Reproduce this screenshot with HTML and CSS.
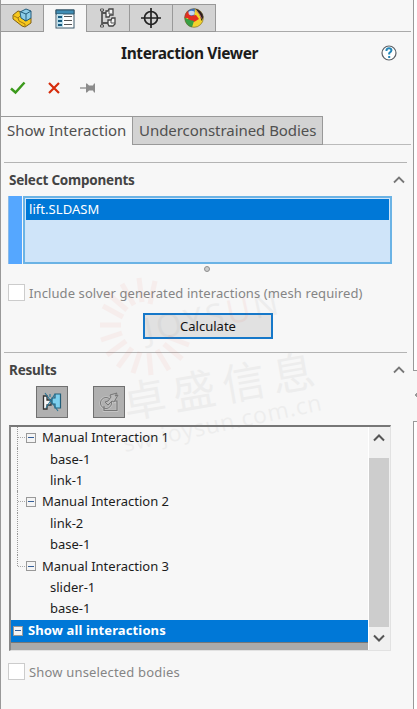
FILE: index.html
```html
<!DOCTYPE html>
<html lang="en">
<head>
    <meta charset="utf-8">
    <title>Interaction Viewer</title>
    <link rel="stylesheet" href="styles.css">
</head>
<body>
    <div id="page">
        <div id="panel">
            <!-- Manager tabs -->
            <div class="manager-tabs">
                <div class="manager-tab">
                    <svg width="20" height="20" viewBox="0 0 20 20">
                        <path d="M1 7l5-4 4 1v6l3 3 6-3v5l-6 4-3-1-9-7z" fill="#f7c81e" stroke="#806018"/>
                        <path d="M2 8l4 2 1 3 6 3v2M6 10l2-2" fill="none" stroke="#a77a10"/>
                        <path d="M8 4l6-3 5 2v7l-5 3-5-3z" fill="#8ccce8" stroke="#245d7c"/>
                        <path d="M9 4l5 2 5-3M14 6v7" fill="none" stroke="#245d7c"/>
                    </svg>
                </div>
                <div class="manager-tab active">
                    <svg width="20" height="20" viewBox="0 0 20 20">
                        <rect x="1" y="1" width="18" height="18" fill="#fff" stroke="#3b596b"/>
                        <path d="M1 1h18v4H1z" fill="#3f8db5" stroke="#2f5267"/>
                        <path d="M2 5h6v13H2z" fill="#b9ddeb"/>
                        <path d="M3 8h4M3 12h4M3 16h4" stroke="#185b80" stroke-width="2"/>
                        <path d="M9 7.500h8M9 11.500h8M9 15.500h8" stroke="#555"/>
                    </svg>
                </div>
                <div class="manager-tab">
                    <svg width="18" height="20" viewBox="0 0 18 20">
                        <path d="M3 1v18M3 5h5M3 15h6" fill="none" stroke="#555" stroke-width="1.800"/>
                        <path d="M1.500 1h3v2h-3zM1.500 17h3v2h-3z" fill="#eee" stroke="#555"/>
                        <path d="M7 3h2l1-2h4v6h-3l-1 2H7zM9 12h3l1-2h3v6l-2 2h-4l-1-2z" fill="#f4f4f4" stroke="#444" stroke-width="1.300"/>
                        <path d="M10 2v4h3M12 12v3h4" fill="none" stroke="#555"/>
                    </svg>
                </div>
                <div class="manager-tab">
                    <svg width="20" height="20" viewBox="0 0 20 20">
                        <circle cx="10" cy="10" r="6.500" fill="none" stroke="#222" stroke-width="1.700"/>
                        <path d="M10 0v20M0 10h20" stroke="#222" stroke-width="1.700"/>
                    </svg>
                </div>
                <div class="manager-tab">
                    <svg width="20" height="20" viewBox="0 0 20 20">
                        <circle cx="10" cy="10" r="9.500" fill="#f2d32c"/>
                        <path d="M.5 10A9.500 9.500 0 0 1 4 2.500L10 10z" fill="#e32d20"/>
                        <path d="M4 2.500Q7 0 11 .5L10 10Q5 8 4 2.500z" fill="#3974cb"/>
                        <path d="M6 8l6-1 3 4-5 3-7-2z" fill="#e32d20"/>
                        <path d="M.5 9.500Q5 12 10 13L8 19.300Q1 18 .5 9.500z" fill="#37a043"/>
                        <path d="M11 .5Q18 1.500 19.500 9l-2 4Q16 5 11 .5z" fill="#291b1b"/>
                        <path d="M12 2.500q4 3 5.500 8" fill="none" stroke="#c87570"/>
                        <ellipse cx="7.500" cy="5" rx="3" ry="2.200" fill="#fff" opacity=".7"/>
                        <circle cx="10" cy="10" r="9.300" fill="none" stroke="#665d48" stroke-width=".6"/>
                    </svg>
                </div>
            </div>

            <div class="title-row">
                <h1>Interaction Viewer</h1>
                <svg class="help" width="16" height="16" viewBox="0 0 16 16">
                    <circle cx="8" cy="8" r="7" fill="#fff" stroke="#5b6066" stroke-width="1.200"/>
                    <path d="M5.500 6V5q.3-1.700 2.500-1.700T10.500 5.300Q10.500 6.500 8.200 8.200V9.500M8.200 11v2" fill="none" stroke="#2587b8" stroke-width="2"/>
                </svg>
            </div>

            <div class="actions">
                <svg width="16" height="14" viewBox="0 0 16 14"><path d="M1 7.500l4.500 4L14.500 1.500" fill="none" stroke="#3c9a1c" stroke-width="2.500"/></svg>
                <svg width="12" height="12" viewBox="0 0 12 12"><path d="M1 1l10 10M11 1L1 11" stroke="#d62c0c" stroke-width="2.200"/></svg>
                <svg width="16" height="12" viewBox="0 0 16 12"><path d="M0 6h7" stroke="#8c8c8c" stroke-width="1.300"/><path d="M6 1.500h1l2 2h4l1-2h1v9h-1l-1-2H9l-2 2H6z" fill="#8c8c8c"/></svg>
            </div>

            <!-- Page tabs -->
            <div class="page-tabs">
                <div class="page-tab current"><span>Show Interaction</span></div>
                <div class="page-tab"><span>Underconstrained Bodies</span></div>
                <div class="tab-line"></div>
            </div>

            <div class="group components">
                <div class="group-head">
                    <h2>Select Components</h2>
                    <svg width="12" height="8" viewBox="0 0 12 8"><path d="M1 6.500l5-5 5 5" fill="none" stroke="#777" stroke-width="1.800"/></svg>
                </div>
                <div class="selection">
                    <div class="selection-color"></div>
                    <div class="selection-list"><div class="selected"><span>lift.SLDASM</span></div></div>
                </div>
                <div class="grip"></div>
                <div class="check-row"><i class="box"></i><span class="solver-label">Include solver generated interactions (mesh required)</span></div>
                <button class="calculate">Calculate</button>
            </div>

            <div class="group results">
                <div class="group-head">
                    <h2>Results</h2>
                    <svg width="12" height="8" viewBox="0 0 12 8"><path d="M1 6.500l5-5 5 5" fill="none" stroke="#777" stroke-width="1.800"/></svg>
                </div>
                <div class="tools">
                    <div class="tool">
                        <svg width="20" height="20" viewBox="0 0 20 20">
                            <path d="M1.500 4H5v4h4v5H5v4H1.500z" fill="#f6f6f6" stroke="#333" stroke-width="1.300"/>
                            <path d="M18.500 2H13v4h-3v6h3v4h5.500z" fill="#7dd0ee" stroke="#235e79" stroke-width="1.200"/>
                            <path d="M3 1l13 18M13 2L4 16M8 2v3" stroke="#287596" stroke-width="1.100"/>
                        </svg>
                    </div>
                    <div class="tool">
                        <svg width="20" height="20" viewBox="0 0 20 20" fill="none">
                            <circle cx="7" cy="11" r="5.500" stroke="#c4c4c4" stroke-width="2.500"/>
                            <path d="M10 10h8v9H5v-5" stroke="#c4c4c4" stroke-width="2.500"/>
                            <circle cx="7" cy="11" r="5.500" stroke="#777"/>
                            <path d="M5 14v4.500h13V9h-3" stroke="#777" stroke-width="1.200"/>
                            <path d="M6 10l3 3 4-4 2 1 4-7-3 1 2-3-7 2 1 2-3 4z" fill="#bbb" stroke="#777"/>
                        </svg>
                    </div>
                </div>

                <div class="tree-box">
                    <div class="tree">
                        <div class="row parent"><i class="minus"></i><span>Manual Interaction 1</span></div>
                        <div class="row child">base-1</div>
                        <div class="row child">link-1</div>
                        <div class="row parent"><i class="minus"></i><span>Manual Interaction 2</span></div>
                        <div class="row child">link-2</div>
                        <div class="row child">base-1</div>
                        <div class="row parent last"><i class="minus"></i><span>Manual Interaction 3</span></div>
                        <div class="row child end">slider-1</div>
                        <div class="row child end">base-1</div>
                        <div class="row show-all"><i class="minus"></i><span>Show all interactions</span></div>
                        <div class="tree-end"></div>
                    </div>
                    <div class="scrollbar">
                        <svg width="12" height="8" viewBox="0 0 12 8"><path d="M1 6.500l5-5 5 5" fill="none" stroke="#555" stroke-width="2"/></svg>
                        <div class="thumb"></div>
                        <svg width="12" height="8" viewBox="0 0 12 8"><path d="M1 1.500l5 5 5-5" fill="none" stroke="#555" stroke-width="2"/></svg>
                    </div>
                </div>
                <div class="check-row unselected"><i class="box"></i><span class="bodies-label">Show unselected bodies</span></div>
            </div>
        </div>

        <!-- Edge of the graphics area -->
        <div id="side">
            <div class="pane upper"></div>
            <div class="splitter"></div>
            <div class="pane lower"></div>
        </div>

        <svg class="watermark" width="417" height="709" viewBox="0 0 417 709">
            <path d="M127 310L106 292M134 305L122 284M142 302L139 278M150 304L155 281M123 317L103 306M121 325L100 325M122 333L101 340M126 341L107 355M132 348L118 367M140 352L133 373M149 353L151 375M157 350L169 370M164 344L182 359M168 337L189 345" stroke="#e85b4b" stroke-width="5" opacity=".06"/>
            <g fill="#777" opacity=".07">
                <text class="mark-logo" x="147" y="342" textLength="136" transform="rotate(-12 147 342)">JOYS<tspan fill="#e85b4b">U</tspan>N</text>
                <text class="mark-cn" x="126" y="419" textLength="194" transform="rotate(-10 126 419)">卓盛信息</text>
                <text class="mark-url" x="125" y="452" textLength="202" transform="rotate(-12 125 452)">sw-joysun.com.cn</text>
            </g>
        </svg>
    </div>
</body>
</html>
```

FILE: styles.css
```css
* {
    box-sizing: border-box;
}

body {
    margin: 0;
    background: #f7f7f7;
    color: #1c1c1c;
    font-family: "Noto Sans", "Open Sans", sans-serif;
    font-size: 13px;
    overflow: hidden;
}

span {
    white-space: nowrap;
}

svg {
    flex: none;
}

h1, h2 {
    margin: 0;
}

#page {
    position: relative;
    display: flex;
    width: 417px;
    height: 709px;
}

#panel {
    width: 413px;
    border-left: 1px solid #999;
    padding-top: 4px;
}

/* Tabs at the top of the manager */
.manager-tabs {
    display: flex;
    height: 28px;
    width: 410px;
    border-bottom: 1px solid #aaa;
}

.manager-tab {
    display: flex;
    align-items: center;
    justify-content: center;
    width: 43px;
    height: 28px;
    background: #d3d3d3;
    border: 1px solid #999;
    border-left: 0;
}

.manager-tab.active {
    background: #f7f7f7;
    border-bottom: 0;
}

.title-row {
    display: flex;
    align-items: center;
    height: 42px;
    padding-left: 120px;
}

h1 {
    width: 260px;
    font-size: 15.500px;
    line-height: 20px;
    letter-spacing: -0.4px;
}

.actions {
    display: flex;
    align-items: center;
    height: 28px;
    padding-left: 9px;
}

.actions svg + svg {
    margin-left: 22px;
}

.actions svg:last-child {
    margin-left: 20px;
}

/* Show Interaction / Underconstrained Bodies */
.page-tabs {
    display: flex;
    height: 29px;
    margin-top: 14px;
    color: #505050;
    font-size: 15px;
    line-height: 27px;
}

.page-tab {
    width: 191px;
    padding-left: 6px;
    background: #d3d3d3;
    border: 1px solid #999;
    letter-spacing: -0.05px;
}

.page-tab.current {
    width: 131px;
    padding-left: 6px;
    background: none;
    border-width: 1px 0 0;
    letter-spacing: 0;
}

.tab-line {
    width: 88px;
    border-bottom: 1px solid #bbb;
}

.group {
    width: 403px;
    margin-left: 3px;
    border-top: 1px solid #b4b4b4;
}

.components {
    height: 190px;
    margin-top: 17px;
}

.group-head {
    display: flex;
    align-items: center;
    justify-content: space-between;
    height: 34px;
    padding: 0 2px 0 5px;
}

.components .group-head {
    height: 33px;
    padding-top: 1px;
}

h2 {
    color: #444;
    font-size: 13.500px;
    line-height: 20px;
    letter-spacing: -0.22px;
}

.selection {
    display: flex;
    gap: 1px;
    width: 384px;
    height: 68px;
    margin-left: 4px;
}

.selection-color {
    width: 14px;
    background: #55a7ff;
    border-left: 1px solid #8abbe9;
}

.selection-list {
    flex: 1;
    padding: 1px;
    background: #cfe4f9;
    border: 2px solid #6bb3e5;
}

.selected {
    height: 21px;
    padding-left: 3px;
    background: #0078d7;
    color: #fff;
    line-height: 21px;
    letter-spacing: 0.05px;
}

.grip {
    width: 6px;
    height: 6px;
    margin: 2px 0 0 200px;
    border: 1px solid #8e8e8e;
    border-radius: 50%;
    background: #ccc;
}

.check-row {
    display: flex;
    align-items: center;
    gap: 4px;
    height: 17px;
    margin: 12px 0 0 4px;
    color: #858585;
}

.solver-label {
    letter-spacing: 0.1px;
}

.bodies-label {
    letter-spacing: 0.17px;
}

.box {
    flex: none;
    width: 17px;
    height: 17px;
    background: #fff;
    border: 1px solid #ccc;
}

.calculate {
    display: block;
    width: 130px;
    height: 26px;
    margin: 12px 0 0 139px;
    padding: 0;
    background: #e1e1e1;
    border: 2px solid #1678c9;
    color: #111;
    font: 13px/20px "Noto Sans", sans-serif;
}

.tools {
    display: flex;
    gap: 25px;
    height: 32px;
    padding-left: 32px;
    margin-top: -1px;
}

.tool {
    display: flex;
    align-items: center;
    justify-content: center;
    width: 32px;
    height: 32px;
    background: #b0b0b0;
    border: 1px solid #707070;
}

/* Interaction list */
.tree-box {
    display: flex;
    width: 382px;
    height: 226px;
    margin: 7px 0 0 5px;
    border: 1px solid #e2e2e2;
    border-top: 2px solid #777;
    border-left: 2px solid #888;
}

.tree {
    display: flex;
    flex-direction: column;
    width: 357px;
}

.row {
    display: flex;
    align-items: center;
    flex: none;
    height: 21.400px;
    line-height: 21px;
}

.parent {
    padding-left: 15px;
    background: repeating-linear-gradient(90deg, #aaa 0 1px, transparent 1px 2px) 7px 50% / 8px 1px no-repeat;
}

.parent, .child {
    position: relative;
}

.parent::before, .child:not(.end)::before {
    content: "";
    position: absolute;
    left: 6px;
    top: 0;
    bottom: 0;
    border-left: 1px dotted #999;
}

.parent.last::before {
    bottom: 50%;
}

.child {
    padding-left: 39px;
}

.minus {
    flex: none;
    width: 10px;
    height: 10px;
    margin-right: 6px;
    background: linear-gradient(#355f99, #355f99) center / 6px 1px no-repeat, #f4f4f4;
    border: 1px solid #999;
}

.show-all {
    height: 22px;
    padding-left: 2px;
    background: #0078d7;
    color: #fff;
    font-weight: bold;
    letter-spacing: 0.12px;
}

.show-all .minus {
    margin-right: 5px;
}

.tree-end {
    flex: 1;
    background: #aaa;
    border-top: 1px solid #777;
}

.scrollbar {
    display: flex;
    flex-direction: column;
    align-items: center;
    flex: 1;
    padding: 7px 1px 7px 0;
    background: #f0f0f0;
    border-left: 1px solid #fff;
}

.thumb {
    width: 20px;
    height: 169px;
    margin: 16px 0 7px;
    background: #cdcdcd;
}

.unselected {
    margin-top: 12px;
}

#side {
    width: 4px;
}

.pane {
    background: #fff;
    border-left: 1px solid #999;
}

.upper {
    height: 371px;
    border-bottom: 1px solid #999;
}

.splitter {
    height: 50px;
    background: radial-gradient(circle at 4px 24px, #999 2px, transparent 2px);
}

.lower {
    height: 288px;
    border-top: 1px solid #999;
}

.watermark {
    position: absolute;
    left: 0;
    top: 0;
    pointer-events: none;
}

.mark-logo {
    font: 33px "Open Sans", sans-serif;
}

.mark-cn {
    font: 43px "Noto Sans CJK SC", sans-serif;
}

.mark-url {
    font: 23px "Open Sans", sans-serif;
}
```
